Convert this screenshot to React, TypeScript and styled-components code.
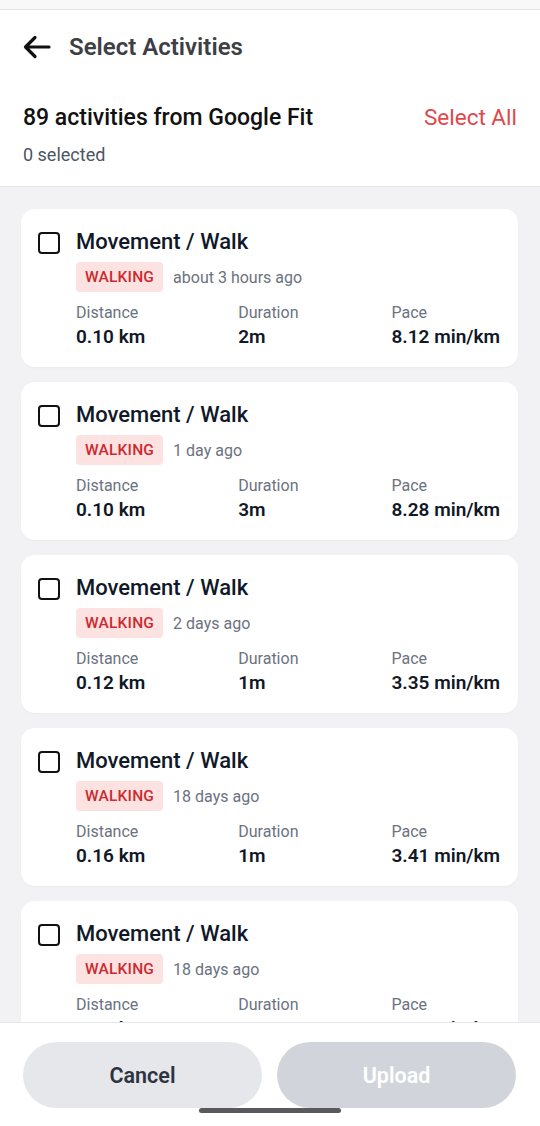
import styled, { createGlobalStyle } from 'styled-components';

const GlobalStyle = createGlobalStyle`
  html, body {
    margin: 0;
    padding: 0;
    background: #ffffff;
  }
  * {
    box-sizing: border-box;
  }
  body {
    font-family: Roboto, "Noto Sans", "Liberation Sans", sans-serif;
  }
`;

const Screen = styled.div`
  width: 540px;
  height: 1126px;
  display: flex;
  flex-direction: column;
  overflow: hidden;
  position: relative;
  background: #f2f2f4;
`;

const StatusStrip = styled.div`
  height: 10px;
  flex-shrink: 0;
  background: #f8f8f8;
  border-bottom: 1px solid #e6e6e8;
`;

const Header = styled.header`
  flex-shrink: 0;
  background: #ffffff;
  padding: 19px 23px 20px;
  border-bottom: 1px solid #e5e7eb;
`;

const TitleRow = styled.div`
  display: flex;
  align-items: center;
  height: 36px;
  gap: 18px;
`;

const BackButton = styled.button`
  border: none;
  background: none;
  padding: 0;
  display: flex;
  align-items: center;
  color: #111111;
  cursor: pointer;
`;

const Title = styled.h1`
  margin: 0;
  font-size: 24px;
  font-weight: 600;
  color: #3d3f45;
`;

const SummaryRow = styled.div`
  margin-top: 38px;
  display: flex;
  justify-content: space-between;
  align-items: center;
  height: 28px;
`;

const Count = styled.div`
  font-size: 23px;
  font-weight: 500;
  color: #111111;
`;

const SelectAll = styled.button`
  border: none;
  background: none;
  padding: 0;
  font-family: inherit;
  font-size: 22.5px;
  color: #e2474b;
  cursor: pointer;
`;

const SelectedCount = styled.div`
  margin-top: 13px;
  font-size: 18px;
  line-height: 22px;
  color: #4b5563;
`;

const List = styled.div`
  flex: 1;
  overflow: hidden;
  padding: 22px 22px 0 21px;
  display: flex;
  flex-direction: column;
  gap: 15px;
`;

const Card = styled.div`
  flex-shrink: 0;
  background: #ffffff;
  border-radius: 14px;
  padding: 21px 18px 18px 17px;
  display: flex;
  gap: 16px;
  box-shadow: 0 1px 2px rgba(0, 0, 0, 0.03);
`;

const Checkbox = styled.div`
  width: 22px;
  height: 22px;
  margin-top: 2px;
  border: 2.5px solid #111111;
  border-radius: 4px;
  flex-shrink: 0;
`;

const CardBody = styled.div`
  flex: 1;
  display: flex;
  flex-direction: column;
`;

const CardTitle = styled.div`
  font-size: 22px;
  line-height: 24px;
  font-weight: 500;
  color: #111827;
`;

const MetaRow = styled.div`
  margin-top: 8px;
  display: flex;
  align-items: center;
  gap: 10px;
`;

const Badge = styled.span`
  height: 30px;
  padding: 0 9px;
  display: inline-flex;
  align-items: center;
  border-radius: 4px;
  background: #fde2e2;
  color: #cc2a2f;
  font-size: 15.5px;
  font-weight: 500;
  letter-spacing: 0.2px;
`;

const When = styled.span`
  font-size: 16px;
  color: #6b7280;
`;

const Stats = styled.div`
  margin-top: 11px;
  display: flex;
  justify-content: space-between;
`;

const Stat = styled.div`
  display: flex;
  flex-direction: column;
  gap: 2px;
`;

const StatLabel = styled.span`
  font-size: 16px;
  line-height: 20px;
  color: #6b7280;
`;

const StatValue = styled.span`
  font-size: 19px;
  line-height: 24px;
  font-weight: 600;
  color: #111827;
`;

const Footer = styled.footer`
  flex-shrink: 0;
  background: #ffffff;
  border-top: 1px solid #e5e7eb;
  padding: 19px 24px 18px 23px;
  display: flex;
  gap: 15px;
`;

const FooterButton = styled.button<{ $variant: 'cancel' | 'upload' }>`
  flex: 1;
  height: 66px;
  border: none;
  border-radius: 33px;
  font-family: inherit;
  font-size: 21.5px;
  font-weight: 600;
  background: ${p => (p.$variant === 'cancel' ? '#e5e7eb' : '#d1d5db')};
  color: ${p => (p.$variant === 'cancel' ? '#2d3340' : '#ffffff')};
  cursor: ${p => (p.$variant === 'cancel' ? 'pointer' : 'default')};
`;

const HomeIndicator = styled.div`
  position: absolute;
  left: 199px;
  bottom: 13px;
  width: 142px;
  height: 5px;
  border-radius: 3px;
  background: #5a5a5e;
`;

const activities = [
  { when: 'about 3 hours ago', distance: '0.10 km', duration: '2m', pace: '8.12 min/km' },
  { when: '1 day ago', distance: '0.10 km', duration: '3m', pace: '8.28 min/km' },
  { when: '2 days ago', distance: '0.12 km', duration: '1m', pace: '3.35 min/km' },
  { when: '18 days ago', distance: '0.16 km', duration: '1m', pace: '3.41 min/km' },
  { when: '18 days ago', distance: '0.09 km', duration: '1m', pace: '3.20 min/km' },
];

export default function App() {
  return (
    <>
      <GlobalStyle />
      <Screen>
        <StatusStrip />
        <Header>
          <TitleRow>
            <BackButton aria-label="Back">
              <svg width="28" height="24" viewBox="0 0 28 24" fill="none">
                <path d="M26 12H3M12 2.5L2.5 12L12 21.5" stroke="currentColor" strokeWidth="3.2" strokeLinecap="round" strokeLinejoin="round" />
              </svg>
            </BackButton>
            <Title>Select Activities</Title>
          </TitleRow>
          <SummaryRow>
            <Count>89 activities from Google Fit</Count>
            <SelectAll>Select All</SelectAll>
          </SummaryRow>
          <SelectedCount>0 selected</SelectedCount>
        </Header>

        <List>
          {activities.map((a, i) => (
            <Card key={i}>
              <Checkbox />
              <CardBody>
                <CardTitle>Movement / Walk</CardTitle>
                <MetaRow>
                  <Badge>WALKING</Badge>
                  <When>{a.when}</When>
                </MetaRow>
                <Stats>
                  <Stat>
                    <StatLabel>Distance</StatLabel>
                    <StatValue>{a.distance}</StatValue>
                  </Stat>
                  <Stat>
                    <StatLabel>Duration</StatLabel>
                    <StatValue>{a.duration}</StatValue>
                  </Stat>
                  <Stat>
                    <StatLabel>Pace</StatLabel>
                    <StatValue>{a.pace}</StatValue>
                  </Stat>
                </Stats>
              </CardBody>
            </Card>
          ))}
        </List>

        <Footer>
          <FooterButton $variant="cancel">Cancel</FooterButton>
          <FooterButton $variant="upload" disabled>Upload</FooterButton>
        </Footer>
        <HomeIndicator />
      </Screen>
    </>
  );
}
